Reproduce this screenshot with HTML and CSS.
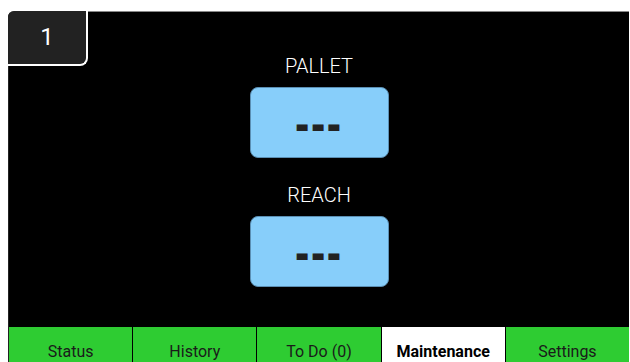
FILE: index.html
```html
<!DOCTYPE html>
<html lang="en">
<head>
  <meta charset="UTF-8">
  <link rel="stylesheet" href="styles.css">
  <title>Maintenance</title>
</head>
<body>
  <div class="panel">
    <div class="unit">1</div>

    <div class="main">
      <div class="reading">
        <div class="label">PALLET</div>
        <div class="value"><span class="dashes">---</span></div>
      </div>
      <div class="reading">
        <div class="label">REACH</div>
        <div class="value"><span class="dashes">---</span></div>
      </div>
    </div>

    <div class="tabs">
      <div class="tab">Status</div>
      <div class="tab">History</div>
      <div class="tab">To Do (0)</div>
      <div class="tab active">Maintenance</div>
      <div class="tab">Settings</div>
    </div>
  </div>
</body>
</html>
```
FILE: styles.css
```css
body {
  background: #fff;
  margin: 11px 0 0 8px;
  font-family: Roboto, "Liberation Sans", sans-serif;
  overflow: hidden;
}

.panel {
  position: relative;
  width: 620px;
  height: 363px;
  background: #000;
  border-top: 1px solid #888;
  border-left: 1px solid #222;
  border-top-left-radius: 6px;
  display: flex;
  flex-direction: column;
}

.unit {
  position: absolute;
  top: -1px;
  left: -1px;
  width: 78px;
  height: 53px;
  background: #222;
  color: #fff;
  font-size: 24px;
  line-height: 53px;
  text-align: center;
  border-right: 2px solid #fff;
  border-bottom: 2px solid #fff;
  border-radius: 6px 0 8px 0;
}

.main {
  flex: 1;
  display: flex;
  flex-direction: column;
  align-items: center;
  padding-top: 42px;
  gap: 25px;
}

.reading {
  display: flex;
  flex-direction: column;
  align-items: center;
  gap: 9px;
}

.label {
  color: #fff;
  font-size: 20px;
  font-weight: 300;
  line-height: 24px;
}

.value {
  width: 137px;
  height: 69px;
  background: #87cefa;
  border: 1px solid #5b8fb3;
  border-radius: 8px;
  display: flex;
  align-items: center;
  justify-content: center;
}

.dashes {
  display: inline-block;
  margin-top: 5px;
  color: #222;
  font-family: "DejaVu Sans", sans-serif;
  font-size: 34px;
  font-weight: bold;
  line-height: 20px;
  letter-spacing: 1px;
  transform: scale(1.05, 1.35);
}

.tabs {
  display: flex;
  gap: 1px;
  height: 48px;
}

.tab {
  flex: 1;
  background: #2ecc32;
  color: #1a1a1a;
  font-size: 16px;
  display: flex;
  align-items: center;
  justify-content: center;
}

.tab.active {
  background: #fff;
  color: #000;
  font-weight: bold;
}
```
